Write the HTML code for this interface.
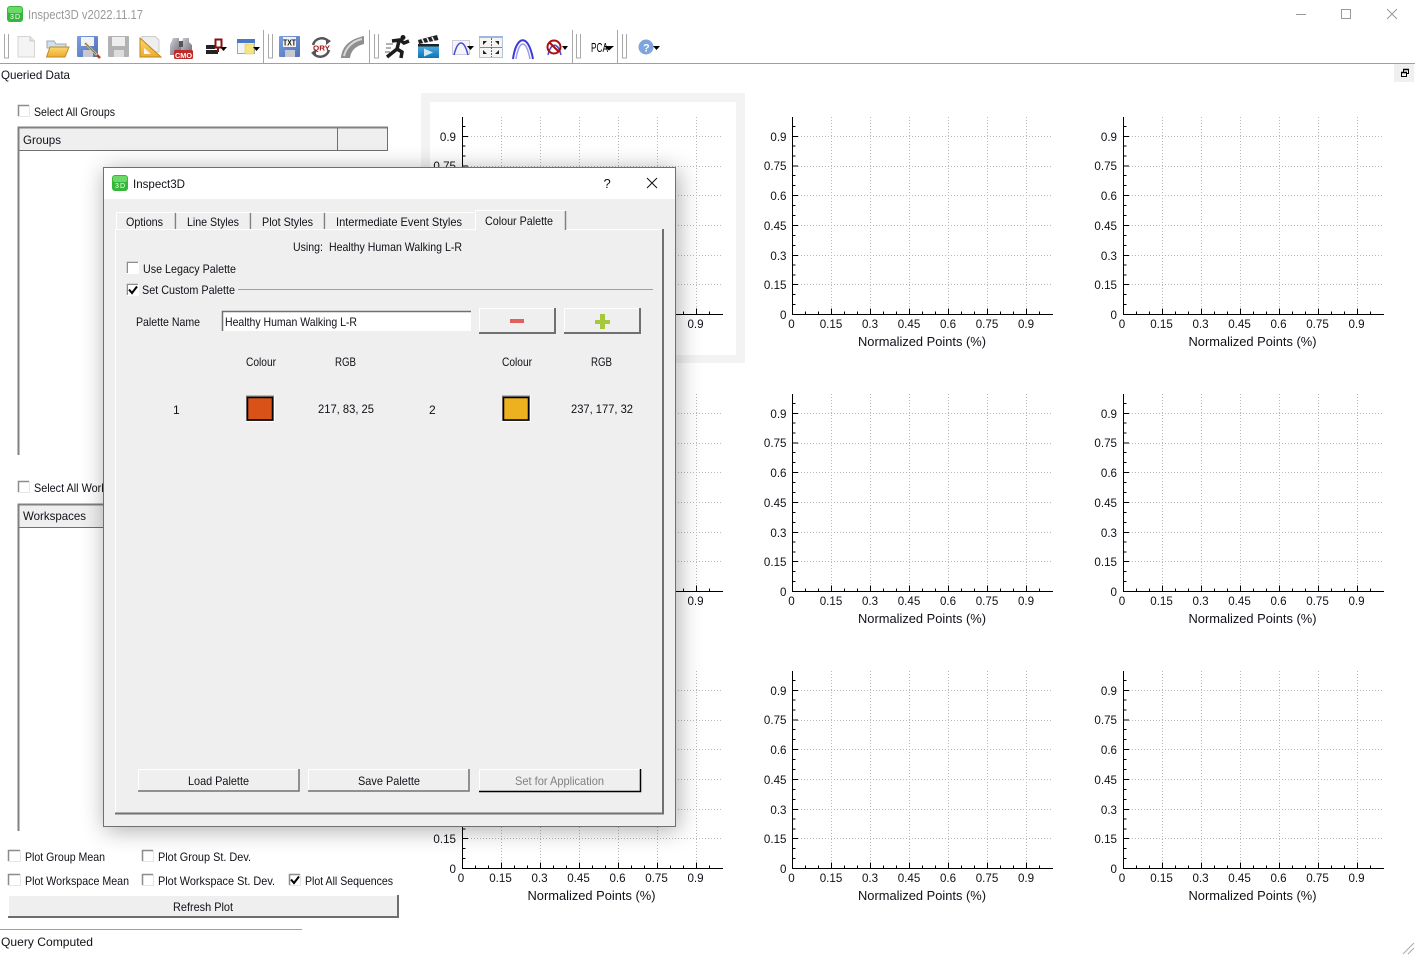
<!DOCTYPE html>
<html><head><meta charset="utf-8"><title>Inspect3D v2022.11.17</title>
<style>
html,body{margin:0;padding:0;width:1415px;height:955px;overflow:hidden;background:#fff}
svg{display:block;position:absolute;left:0;top:0}
text{font-family:"Liberation Sans",sans-serif;font-size:12px;fill:#101018}
.n{text-anchor:middle;font-size:11.6px}.e{text-anchor:end;font-size:11.6px}
.ttl{font-size:13px;text-anchor:middle}
#dlg{position:absolute;left:103px;top:167px;width:573px;height:660px;box-shadow:2px 3px 22px rgba(0,0,0,.33);background:#efefef}
</style></head><body>
<svg width="1415" height="955" viewBox="0 0 1415 955">
<defs>
<g id="pl">
<path d="M792.5 117V315M792 314.5H1053M793 136.5H798M793 166H798M793 195.5H798M793 225.5H798M793 255.5H798M793 284.5H798M793 304.5H795.5M793 294.5H795.5M793 275H795.5M793 265H795.5M793 245.5H795.5M793 235.5H795.5M793 215.5H795.5M793 205.5H795.5M793 185.5H795.5M793 175.5H795.5M793 156H795.5M793 146H795.5M793 126.5H795.5M831.5 314V308.5M870.5 314V308.5M909.5 314V308.5M948.5 314V308.5M987.5 314V308.5M1026.5 314V308.5M805.5 314V311.5M818.5 314V311.5M844.5 314V311.5M857.5 314V311.5M883.5 314V311.5M896.5 314V311.5M922.5 314V311.5M935.5 314V311.5M961.5 314V311.5M974.5 314V311.5M1000.5 314V311.5M1013.5 314V311.5M1039.5 314V311.5" stroke="#000" fill="none"/>
<path d="M798 136.5H1052M798 166.5H1052M798 195.5H1052M798 225.5H1052M798 255.5H1052M798 284.5H1052M831.5 117V308M870.5 117V308M909.5 117V308M948.5 117V308M987.5 117V308M1026.5 117V308" stroke="#b8b8b8" stroke-dasharray="1 2" fill="none"/>
</g>
<linearGradient id="fy" x1="0" y1="0" x2="0" y2="1"><stop offset="0" stop-color="#fbd874"/><stop offset="1" stop-color="#eeaa2e"/></linearGradient>
<linearGradient id="bf" x1="0" y1="0" x2="1" y2="1"><stop offset="0" stop-color="#7d9ee0"/><stop offset="1" stop-color="#4f6fb8"/></linearGradient>
<linearGradient id="cl" x1="0" y1="0" x2="0" y2="1"><stop offset="0" stop-color="#58b4e8"/><stop offset="1" stop-color="#0e74b8"/></linearGradient>
<linearGradient id="gr" x1="0" y1="0" x2="1" y2="1"><stop offset="0" stop-color="#cfcfd6"/><stop offset="1" stop-color="#6a6a74"/></linearGradient>
</defs>

<!-- title bar -->
<rect x="7" y="6" width="16" height="16" rx="3" fill="#35b83a"/><rect x="8" y="7" width="14" height="6" rx="2" fill="#6bd96a"/>
<text x="10" y="19" style="font-size:7px;fill:#fff" textLength="10">3D</text>
<text x="28" y="19" textLength="115" lengthAdjust="spacingAndGlyphs" style="font-size:13px;fill:#9a9a9a">Inspect3D v2022.11.17</text>
<path d="M1296 14.5H1306" stroke="#999" fill="none"/><rect x="1341.5" y="9.5" width="9" height="9" fill="none" stroke="#999"/><path d="M1387 9L1397 19M1397 9L1387 19" stroke="#999" fill="none"/>

<!-- toolbar structure -->
<path d="M0 63.5H1415" stroke="#a0a0a0" fill="none"/>
<g fill="none" stroke="#a8a8a8">
<path d="M263.5 30V63M369.5 30V63M572.5 30V63M617.5 30V63"/>
<path d="M4.5 34V58H8.5V34M268.5 34V58H272.5V34M374.5 34V58H378.5V34M576.5 34V58H580.5V34M622.5 34V58H626.5V34"/>
</g>

<!-- icons -->
<path d="M18 36.5H30L34.5 41V57H18Z" fill="#f4f4f4" stroke="#d4d4d4"/><path d="M30 36.5V41H34.5" fill="#e4e4e4" stroke="#ccc"/>
<path d="M47 41H54L56 44H66V48H47Z" fill="#cfe0ee" stroke="#9ab"/><path d="M46.5 57L50 47H69L65 57Z" fill="url(#fy)" stroke="#c08a20"/>
<rect x="77" y="36" width="21" height="21" rx="1" fill="url(#bf)"/><rect x="81" y="37" width="13" height="9" fill="#f2f2f2"/><rect x="83" y="50" width="10" height="7" fill="#c8c8d0"/><path d="M85 43L97 55" stroke="#e6c050" stroke-width="2.5" fill="none"/><path d="M85 43L96 54" stroke="#555" stroke-width=".6" fill="none"/><path d="M97 55L100 58" stroke="#c03030" stroke-width="2.5" fill="none"/>
<rect x="108" y="36" width="21" height="21" rx="1" fill="#b2b2b2"/><rect x="112" y="37" width="13" height="9" fill="#eee"/><rect x="114" y="50" width="10" height="7" fill="#ddd"/>
<path d="M142 36.5H155L159 40V52H142Z" fill="#eee" stroke="#ccc"/><path d="M140 38V57H161Z" fill="url(#fy)" stroke="#b88a10"/><path d="M144 48V54H151Z" fill="#f8f8f0"/>
<path d="M173 38H179V42L181 45V55H170V45Z" fill="url(#gr)"/><path d="M183 38H189V42L192 45V55H181V45Z" fill="url(#gr)"/><rect x="179" y="41" width="4" height="6" fill="#555"/>
<rect x="174" y="50" width="19" height="9" rx="1.500" fill="#c22a2a"/><text x="175" y="58" style="font-size:7.5px;font-weight:bold;fill:#fff" textLength="17" lengthAdjust="spacingAndGlyphs">CMO</text>
<path d="M206 45H215V49H206ZM206 50H218V54H206Z" fill="#222"/><rect x="215.500" y="39.500" width="6" height="8" fill="#fff" stroke="#8a1010" stroke-width="2"/><path d="M218 47V52" stroke="#8a1010" stroke-width="2"/><path d="M220 47H227L223.5 51Z" fill="#000"/>
<rect x="237.500" y="39.500" width="17" height="14" fill="#f2f4f8" stroke="#9ab"/><rect x="237" y="39" width="18" height="4" fill="#4a78c8"/><rect x="245" y="44" width="9" height="10" fill="#f7e47a" stroke="#d0c060" stroke-width=".5"/><path d="M253 47H260L256.5 51Z" fill="#000"/>
<rect x="279" y="36" width="21" height="21" rx="1" fill="url(#bf)"/><rect x="283" y="37" width="13" height="10" fill="#f2f2f2"/><rect x="285" y="50" width="10" height="7" fill="#c8c8d0"/>
<text x="283" y="45.5" style="font-size:8px;font-weight:bold;fill:#111" textLength="13" lengthAdjust="spacingAndGlyphs">TXT</text>
<path d="M313 45A9 9 0 0 1 329 42M329 50A9 9 0 0 1 313 53" fill="none" stroke="#555" stroke-width="2.5"/><path d="M326 38L331 41L326 45ZM316 56L311 53L316 49Z" fill="#555"/><text x="313" y="50.500" style="font-size:7.5px;font-weight:bold;fill:#a01818" textLength="17" lengthAdjust="spacingAndGlyphs">QRY</text>
<path d="M341 58C342 46 350 39 364 36V44C356 46 351 50 350 58Z" fill="#8f8f8f"/><path d="M344 56C346 47 353 41 362 39" fill="none" stroke="#d8d8d8" stroke-width="2"/>
<path d="M386 44H393M386 48H391M385 52H390" stroke="#999" stroke-width="1.500" fill="none"/>
<circle cx="403" cy="37.500" r="2.500" fill="#1c1c1c"/><path d="M392 41L400 40L404 43L409 41M399 41L397 49L402 52L401 58M397 49L392 53L387 57" fill="none" stroke="#1c1c1c" stroke-width="3.500"/>
<path d="M418 40L437 35L438.500 40L419 44Z" fill="#222"/><path d="M422 39L424 43M427 38L429 42M432 37L434 41" stroke="#eee" stroke-width="1.500"/><rect x="418" y="44" width="21" height="14" fill="url(#cl)"/><rect x="418" y="44" width="21" height="2.500" fill="#222"/><path d="M424 48.500L433 52.500L424 56.500Z" fill="#cfe8f5"/>
<rect x="452.500" y="40.500" width="17" height="14" fill="#f4f4fa" stroke="#ccd"/><path d="M454 55C458 39 464 39 468 55" fill="none" stroke="#4a4ad0" stroke-width="1.500"/><path d="M467 46H474L470.5 50Z" fill="#000"/>
<rect x="479.500" y="36.500" width="23" height="21" fill="#f4f4f4" stroke="#b8c4d8"/><rect x="479" y="36" width="24" height="2" fill="#9cb8dc"/><path d="M480 47.500H502" stroke="#888"/><path d="M491.500 38V57" stroke="#e03030" stroke-dasharray="2 1"/><path d="M483 41L487 41L483 45ZM499 41L495 41L499 45ZM483 54L487 54L483 50ZM499 54L495 54L499 50Z" fill="#222"/>
<path d="M513 59C516 36 528 32 533 59" fill="none" stroke="#3a3ad8" stroke-width="2"/><path d="M516 59C519 40 526 38 530 59" fill="none" stroke="#9c9cf0" stroke-width="1.500"/>
<path d="M548 55C551 42 558 42 561 55" fill="none" stroke="#4a4ad0" stroke-width="1.500"/><circle cx="554" cy="47" r="6.500" fill="none" stroke="#a81010" stroke-width="2"/><path d="M549.500 42.500L558.500 51.500" stroke="#a81010" stroke-width="2"/><path d="M562 46H568L565 50Z" fill="#000"/>
<text x="591" y="52" style="font-size:13px;fill:#000" textLength="17" lengthAdjust="spacingAndGlyphs">PCA</text><path d="M604 46H614L609 50.500Z" fill="#000"/>
<circle cx="646" cy="47" r="7.500" fill="#7da4de"/><text x="643" y="51.5" style="font-size:11px;font-weight:bold;fill:#fff">?</text><path d="M653 46H660L656.5 50Z" fill="#000"/>

<text x="1" y="79" textLength="69" lengthAdjust="spacingAndGlyphs">Queried Data</text>
<rect x="1394" y="64" width="20" height="18" fill="#f0f0f0"/><rect x="1403.5" y="69.5" width="5" height="4" fill="#f0f0f0" stroke="#000"/><rect x="1401.5" y="72.5" width="5" height="4" fill="#f0f0f0" stroke="#000"/><path d="M1403 69.5H1409M1401 72.5H1407" stroke="#000" stroke-width="1.500"/>

<!-- left panel -->
<path d="M18.5 116V105.5H29" fill="#fff" stroke="#8c8c8c" stroke-width="1.500"/><path d="M29.5 105V116.5H18" fill="none" stroke="#e6e6e6"/>
<text x="34" y="116" textLength="81" lengthAdjust="spacingAndGlyphs">Select All Groups</text>
<rect x="18" y="127" width="370" height="24" fill="#efefef"/>
<path d="M18.5 151V127.5H388" fill="none" stroke="#808080" stroke-width="2"/><path d="M18 150.5H388M387.5 127V151M337.5 128V150" fill="none" stroke="#707070"/>
<text x="23" y="144" textLength="38" lengthAdjust="spacingAndGlyphs">Groups</text>
<path d="M18.5 150V455" stroke="#808080" stroke-width="2" fill="none"/>

<path d="M18.5 492V481.5H29" fill="#fff" stroke="#8c8c8c" stroke-width="1.500"/><path d="M29.5 481V492.5H18" fill="none" stroke="#e6e6e6"/>
<text x="34" y="492" textLength="107" lengthAdjust="spacingAndGlyphs">Select All Workspaces</text>
<rect x="18" y="504" width="370" height="24" fill="#efefef"/>
<path d="M18.5 528V504.5H388" fill="none" stroke="#808080" stroke-width="2"/><path d="M18 527.5H388" fill="none" stroke="#707070"/>
<text x="23" y="520" textLength="63" lengthAdjust="spacingAndGlyphs">Workspaces</text>
<path d="M18.5 527V831" stroke="#808080" stroke-width="2" fill="none"/>

<g id="cbs">
<path d="M8.5 861V850.5H20M142.5 861V850.5H153M8.5 885V874.5H20M142.5 885V874.5H153M289.5 885V874.5H300" fill="none" stroke="#8c8c8c" stroke-width="1.500"/>
<path d="M20.5 850V861.5H8M153.5 850V861.5H142M20.5 874V885.5H8M153.5 874V885.5H142M300.5 874V885.5H289" fill="none" stroke="#e6e6e6"/>
<path d="M291 879.5L294 883L299 876.5" fill="none" stroke="#000" stroke-width="2"/>
</g>
<text x="25" y="861" textLength="80" lengthAdjust="spacingAndGlyphs">Plot Group Mean</text>
<text x="158" y="861" textLength="93" lengthAdjust="spacingAndGlyphs">Plot Group St. Dev.</text>
<text x="25" y="885" textLength="104" lengthAdjust="spacingAndGlyphs">Plot Workspace Mean</text>
<text x="158" y="885" textLength="117" lengthAdjust="spacingAndGlyphs">Plot Workspace St. Dev.</text>
<text x="305" y="885" textLength="88" lengthAdjust="spacingAndGlyphs">Plot All Sequences</text>
<rect x="8" y="895" width="391" height="23" fill="#efefef"/><path d="M8.5 918V895.5H398" fill="none" stroke="#fff"/><path d="M8 917H398V895" fill="none" stroke="#6e6e6e" stroke-width="2"/>
<text x="173" y="911" textLength="60" lengthAdjust="spacingAndGlyphs">Refresh Plot</text>
<path d="M0 929.5H302" stroke="#a0a0a0" fill="none"/>
<text x="1" y="946" textLength="92" lengthAdjust="spacingAndGlyphs">Query Computed</text>
<path d="M1403 954L1414 943M1408 954L1414 948" stroke="#aaa" fill="none"/>

<!-- selected plot bg -->
<rect x="421" y="93" width="324" height="270" fill="#f3f3f3"/><rect x="430" y="102" width="306" height="253" fill="#fff"/>

<!-- plots -->
<g transform="translate(-330.5,0)"><use href="#pl" x="0.5"/>
<text class="e" x="786.5" y="141">0.9</text><text class="e" x="786.5" y="170">0.75</text><text class="e" x="786.5" y="200">0.6</text><text class="e" x="786.5" y="230">0.45</text><text class="e" x="786.5" y="260">0.3</text><text class="e" x="786.5" y="289">0.15</text><text class="e" x="786.5" y="319">0</text>
<text class="n" x="791.5" y="328">0</text><text class="n" x="831" y="328">0.15</text><text class="n" x="870" y="328">0.3</text><text class="n" x="909" y="328">0.45</text><text class="n" x="948" y="328">0.6</text><text class="n" x="987" y="328">0.75</text><text class="n" x="1026" y="328">0.9</text>
<text class="ttl" x="922" y="346" textLength="128" lengthAdjust="spacingAndGlyphs">Normalized Points (%)</text></g>
<g><use href="#pl"/>
<text class="e" x="786.5" y="141">0.9</text><text class="e" x="786.5" y="170">0.75</text><text class="e" x="786.5" y="200">0.6</text><text class="e" x="786.5" y="230">0.45</text><text class="e" x="786.5" y="260">0.3</text><text class="e" x="786.5" y="289">0.15</text><text class="e" x="786.5" y="319">0</text>
<text class="n" x="791.5" y="328">0</text><text class="n" x="831" y="328">0.15</text><text class="n" x="870" y="328">0.3</text><text class="n" x="909" y="328">0.45</text><text class="n" x="948" y="328">0.6</text><text class="n" x="987" y="328">0.75</text><text class="n" x="1026" y="328">0.9</text>
<text class="ttl" x="922" y="346" textLength="128" lengthAdjust="spacingAndGlyphs">Normalized Points (%)</text></g>
<g transform="translate(330.5,0)"><use href="#pl" x="0.5"/>
<text class="e" x="786.5" y="141">0.9</text><text class="e" x="786.5" y="170">0.75</text><text class="e" x="786.5" y="200">0.6</text><text class="e" x="786.5" y="230">0.45</text><text class="e" x="786.5" y="260">0.3</text><text class="e" x="786.5" y="289">0.15</text><text class="e" x="786.5" y="319">0</text>
<text class="n" x="791.5" y="328">0</text><text class="n" x="831" y="328">0.15</text><text class="n" x="870" y="328">0.3</text><text class="n" x="909" y="328">0.45</text><text class="n" x="948" y="328">0.6</text><text class="n" x="987" y="328">0.75</text><text class="n" x="1026" y="328">0.9</text>
<text class="ttl" x="922" y="346" textLength="128" lengthAdjust="spacingAndGlyphs">Normalized Points (%)</text></g>
<g transform="translate(-330.5,277)"><use href="#pl" x="0.5"/>
<text class="e" x="786.5" y="141">0.9</text><text class="e" x="786.5" y="170">0.75</text><text class="e" x="786.5" y="200">0.6</text><text class="e" x="786.5" y="230">0.45</text><text class="e" x="786.5" y="260">0.3</text><text class="e" x="786.5" y="289">0.15</text><text class="e" x="786.5" y="319">0</text>
<text class="n" x="791.5" y="328">0</text><text class="n" x="831" y="328">0.15</text><text class="n" x="870" y="328">0.3</text><text class="n" x="909" y="328">0.45</text><text class="n" x="948" y="328">0.6</text><text class="n" x="987" y="328">0.75</text><text class="n" x="1026" y="328">0.9</text>
<text class="ttl" x="922" y="346" textLength="128" lengthAdjust="spacingAndGlyphs">Normalized Points (%)</text></g>
<g transform="translate(0,277)"><use href="#pl"/>
<text class="e" x="786.5" y="141">0.9</text><text class="e" x="786.5" y="170">0.75</text><text class="e" x="786.5" y="200">0.6</text><text class="e" x="786.5" y="230">0.45</text><text class="e" x="786.5" y="260">0.3</text><text class="e" x="786.5" y="289">0.15</text><text class="e" x="786.5" y="319">0</text>
<text class="n" x="791.5" y="328">0</text><text class="n" x="831" y="328">0.15</text><text class="n" x="870" y="328">0.3</text><text class="n" x="909" y="328">0.45</text><text class="n" x="948" y="328">0.6</text><text class="n" x="987" y="328">0.75</text><text class="n" x="1026" y="328">0.9</text>
<text class="ttl" x="922" y="346" textLength="128" lengthAdjust="spacingAndGlyphs">Normalized Points (%)</text></g>
<g transform="translate(330.5,277)"><use href="#pl" x="0.5"/>
<text class="e" x="786.5" y="141">0.9</text><text class="e" x="786.5" y="170">0.75</text><text class="e" x="786.5" y="200">0.6</text><text class="e" x="786.5" y="230">0.45</text><text class="e" x="786.5" y="260">0.3</text><text class="e" x="786.5" y="289">0.15</text><text class="e" x="786.5" y="319">0</text>
<text class="n" x="791.5" y="328">0</text><text class="n" x="831" y="328">0.15</text><text class="n" x="870" y="328">0.3</text><text class="n" x="909" y="328">0.45</text><text class="n" x="948" y="328">0.6</text><text class="n" x="987" y="328">0.75</text><text class="n" x="1026" y="328">0.9</text>
<text class="ttl" x="922" y="346" textLength="128" lengthAdjust="spacingAndGlyphs">Normalized Points (%)</text></g>
<g transform="translate(-330.5,554)"><use href="#pl" x="0.5"/>
<text class="e" x="786.5" y="141">0.9</text><text class="e" x="786.5" y="170">0.75</text><text class="e" x="786.5" y="200">0.6</text><text class="e" x="786.5" y="230">0.45</text><text class="e" x="786.5" y="260">0.3</text><text class="e" x="786.5" y="289">0.15</text><text class="e" x="786.5" y="319">0</text>
<text class="n" x="791.5" y="328">0</text><text class="n" x="831" y="328">0.15</text><text class="n" x="870" y="328">0.3</text><text class="n" x="909" y="328">0.45</text><text class="n" x="948" y="328">0.6</text><text class="n" x="987" y="328">0.75</text><text class="n" x="1026" y="328">0.9</text>
<text class="ttl" x="922" y="346" textLength="128" lengthAdjust="spacingAndGlyphs">Normalized Points (%)</text></g>
<g transform="translate(0,554)"><use href="#pl"/>
<text class="e" x="786.5" y="141">0.9</text><text class="e" x="786.5" y="170">0.75</text><text class="e" x="786.5" y="200">0.6</text><text class="e" x="786.5" y="230">0.45</text><text class="e" x="786.5" y="260">0.3</text><text class="e" x="786.5" y="289">0.15</text><text class="e" x="786.5" y="319">0</text>
<text class="n" x="791.5" y="328">0</text><text class="n" x="831" y="328">0.15</text><text class="n" x="870" y="328">0.3</text><text class="n" x="909" y="328">0.45</text><text class="n" x="948" y="328">0.6</text><text class="n" x="987" y="328">0.75</text><text class="n" x="1026" y="328">0.9</text>
<text class="ttl" x="922" y="346" textLength="128" lengthAdjust="spacingAndGlyphs">Normalized Points (%)</text></g>
<g transform="translate(330.5,554)"><use href="#pl" x="0.5"/>
<text class="e" x="786.5" y="141">0.9</text><text class="e" x="786.5" y="170">0.75</text><text class="e" x="786.5" y="200">0.6</text><text class="e" x="786.5" y="230">0.45</text><text class="e" x="786.5" y="260">0.3</text><text class="e" x="786.5" y="289">0.15</text><text class="e" x="786.5" y="319">0</text>
<text class="n" x="791.5" y="328">0</text><text class="n" x="831" y="328">0.15</text><text class="n" x="870" y="328">0.3</text><text class="n" x="909" y="328">0.45</text><text class="n" x="948" y="328">0.6</text><text class="n" x="987" y="328">0.75</text><text class="n" x="1026" y="328">0.9</text>
<text class="ttl" x="922" y="346" textLength="128" lengthAdjust="spacingAndGlyphs">Normalized Points (%)</text></g>
</svg>

<div id="dlg">
<svg width="573" height="660" viewBox="103 167 573 660">
<rect x="103" y="167" width="573" height="660" fill="#efefef"/>
<rect x="103" y="167" width="573" height="32" fill="#fff"/>
<rect x="103.5" y="167.5" width="572" height="659" fill="none" stroke="#707070"/>
<rect x="112" y="175" width="16" height="16" rx="3" fill="#35b83a"/><rect x="113" y="176" width="14" height="6" rx="2" fill="#6bd96a"/>
<text x="115" y="188" style="font-size:7px;fill:#fff" textLength="10">3D</text>
<text x="133" y="188" textLength="52" lengthAdjust="spacingAndGlyphs">Inspect3D</text>
<text x="603.5" y="188" style="font-size:13px">?</text>
<path d="M647 178L657 188M657 178L647 188" stroke="#111" fill="none"/>

<!-- pane -->
<path d="M115.5 814V229.5H475M566 229.5H662" fill="none" stroke="#fff"/>
<path d="M115 813.5H663V229" fill="none" stroke="#707070" stroke-width="2"/>
<!-- tabs -->
<path d="M116.5 229V212.5H175M176.5 229V212.5H250M251.5 229V212.5H324M325.5 229V212.5H474" fill="none" stroke="#fff"/>
<path d="M175.5 213V229M250.5 213V229M324.5 213V229" fill="none" stroke="#808080" stroke-width="1.500"/>
<path d="M475.5 230V210.5H565" fill="none" stroke="#fff"/><path d="M565.5 211V230" fill="none" stroke="#808080" stroke-width="1.500"/>
<text x="126" y="226" textLength="37" lengthAdjust="spacingAndGlyphs">Options</text>
<text x="187" y="226" textLength="52" lengthAdjust="spacingAndGlyphs">Line Styles</text>
<text x="262" y="226" textLength="51" lengthAdjust="spacingAndGlyphs">Plot Styles</text>
<text x="336" y="226" textLength="126" lengthAdjust="spacingAndGlyphs">Intermediate Event Styles</text>
<text x="485" y="225" textLength="68" lengthAdjust="spacingAndGlyphs">Colour Palette</text>

<text x="293" y="251" textLength="30" lengthAdjust="spacingAndGlyphs">Using:</text>
<text x="329" y="251" textLength="133" lengthAdjust="spacingAndGlyphs">Healthy Human Walking L-R</text>
<path d="M127.5 273V262.5H138M127.5 295V284.5H138" fill="none" stroke="#8c8c8c" stroke-width="1.500"/>
<path d="M138.5 262V273.5H127M138.5 284V295.5H127" fill="none" stroke="#fff"/>
<rect x="128" y="263" width="10" height="10" fill="#fff"/><rect x="128" y="285" width="10" height="10" fill="#fff"/>
<path d="M129 289.5L132 293L137 286.5" fill="none" stroke="#000" stroke-width="2"/>
<text x="143" y="273" textLength="93" lengthAdjust="spacingAndGlyphs">Use Legacy Palette</text>
<text x="142" y="294" textLength="93" lengthAdjust="spacingAndGlyphs">Set Custom Palette</text>
<path d="M238 289.5H653" stroke="#a0a0a0" fill="none"/>

<text x="136" y="326" textLength="64" lengthAdjust="spacingAndGlyphs">Palette Name</text>
<rect x="222" y="311" width="249" height="20" fill="#fff"/><path d="M222.5 331V311.5H471" fill="none" stroke="#707070" stroke-width="1.500"/>
<text x="225" y="326" textLength="132" lengthAdjust="spacingAndGlyphs">Healthy Human Walking L-R</text>

<path d="M479.5 334V308.5H556M564.5 334V308.5H641" fill="none" stroke="#fff"/>
<path d="M479 333H555V308M564 333H640V308" fill="none" stroke="#707070" stroke-width="2"/>
<rect x="510" y="319" width="14" height="4" fill="#e0605a"/>
<path d="M595 320H600V314H605V320H610V324H605V329H600V324H595Z" fill="#a6c83c"/>

<text x="246" y="366" textLength="30" lengthAdjust="spacingAndGlyphs">Colour</text>
<text x="335" y="366" textLength="21" lengthAdjust="spacingAndGlyphs">RGB</text>
<text x="502" y="366" textLength="30" lengthAdjust="spacingAndGlyphs">Colour</text>
<text x="591" y="366" textLength="21" lengthAdjust="spacingAndGlyphs">RGB</text>
<text x="173" y="414">1</text>
<text x="429" y="414">2</text>
<rect x="246" y="395.500" width="29" height="26.500" fill="#fff"/><rect x="246" y="395.500" width="28" height="25.500" fill="#808080"/><rect x="247.500" y="397.500" width="25" height="22.500" fill="#d95319" stroke="#000" stroke-width="1.500"/>
<rect x="502" y="395.500" width="29" height="26.500" fill="#fff"/><rect x="502" y="395.500" width="28" height="25.500" fill="#808080"/><rect x="503.500" y="397.500" width="25" height="22.500" fill="#edb120" stroke="#000" stroke-width="1.500"/>
<text x="318" y="413" textLength="56" lengthAdjust="spacingAndGlyphs">217, 83, 25</text>
<text x="571" y="413" textLength="62" lengthAdjust="spacingAndGlyphs">237, 177, 32</text>

<path d="M138.5 792V769.5H300M308.5 792V769.5H470M479.5 792V769.5H641" fill="none" stroke="#fff"/>
<path d="M138 791H299V769M308 791H469V769" fill="none" stroke="#707070" stroke-width="1.500"/>
<path d="M479 791.500H640.500V769" fill="none" stroke="#000" stroke-width="1.500"/>
<text x="188" y="785" textLength="61" lengthAdjust="spacingAndGlyphs">Load Palette</text>
<text x="358" y="785" textLength="62" lengthAdjust="spacingAndGlyphs">Save Palette</text>
<text x="515" y="785" textLength="89" lengthAdjust="spacingAndGlyphs" style="fill:#808080">Set for Application</text>
</svg>
</div>
</body></html>
